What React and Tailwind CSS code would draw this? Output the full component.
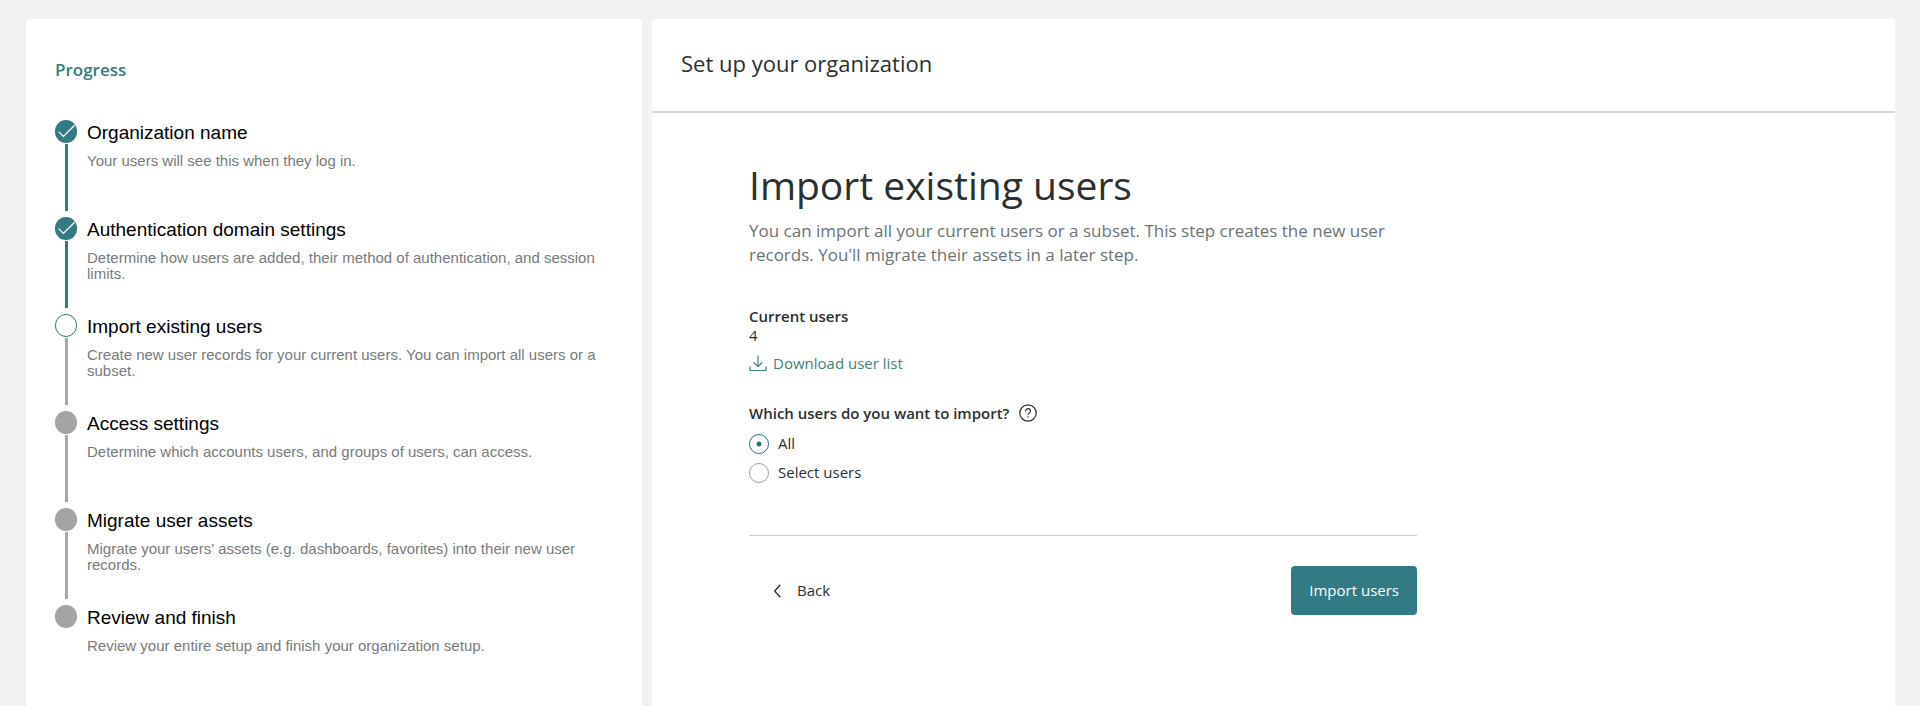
import { useState } from "react";

const steps = [
  { title: "Organization name", text: "Your users will see this when they log in.", state: "done" },
  {
    title: "Authentication domain settings",
    text: "Determine how users are added, their method of authentication, and session limits.",
    state: "done",
  },
  {
    title: "Import existing users",
    text: "Create new user records for your current users. You can import all users or a subset.",
    state: "current",
  },
  {
    title: "Access settings",
    text: "Determine which accounts users, and groups of users, can access.",
    state: "todo",
  },
  {
    title: "Migrate user assets",
    text: "Migrate your users' assets (e.g. dashboards, favorites) into their new user records.",
    state: "todo",
  },
  { title: "Review and finish", text: "Review your entire setup and finish your organization setup.", state: "todo" },
];

const circleStyles = {
  done: "bg-[#357a82]",
  current: "border border-[#2f7a74] bg-white",
  todo: "bg-[#a3a5a5]",
};

function Step({ step, last }) {
  return (
    <li className="flex min-h-[97px] gap-[10px]">
      <div className="flex w-[22px] shrink-0 flex-col items-center gap-px">
        <span className={`flex h-[23px] w-[22px] items-center justify-center rounded-full ${circleStyles[step.state]}`}>
          {step.state === "done" && (
            <svg viewBox="0 0 22 23" className="h-[23px] w-[22px]" fill="none" stroke="#fff" strokeWidth="1.3" aria-hidden="true">
              <path d="M3.6 11.6 8.4 16.4 19.6 5.2" />
            </svg>
          )}
        </span>
        {!last && (
          <span className={`h-[67px] w-[3px] ${step.state === "done" ? "bg-[#357a82]" : "bg-[#a8aaaa]"}`} />
        )}
      </div>
      <div className="pt-px font-['Liberation_Sans',Arial,sans-serif]">
        <h3 className="text-[19px] leading-6 text-black">{step.title}</h3>
        <p className="mt-2 text-[15px] leading-4 text-[#777b7b]">{step.text}</p>
      </div>
    </li>
  );
}

function Choice({ label, checked, onChange }) {
  return (
    <label className="flex h-[29px] items-center gap-[9px] text-[15px]">
      <input
        type="radio"
        name="import-scope"
        checked={checked}
        onChange={onChange}
        className="h-5 w-5 appearance-none rounded-full border border-[#9a9e9e] bg-white checked:border-[#1f6f70] checked:bg-[radial-gradient(circle,#2a7480_2px,transparent_3px)]"
      />
      {label}
    </label>
  );
}

export default function App() {
  const [scope, setScope] = useState("all");
  return (
    <div className="flex min-h-screen gap-[10px] bg-[#f2f2f2] pt-[19px] pr-[25px] pl-[26px] font-['Open_Sans',sans-serif] text-[#2a3030]">
      <aside className="w-[616px] min-w-0 rounded-t-[4px] bg-white pt-[39px] pr-10 pl-[29px]">
        <h2 className="text-[17px] leading-6 font-semibold text-[#357c7c]">Progress</h2>
        <ol className="mt-[38px]">
          {steps.map((step, i) => (
            <Step key={step.title} step={step} last={i === steps.length - 1} />
          ))}
        </ol>
      </aside>

      <main className="min-w-0 flex-1 rounded-t-[4px] bg-white">
        <header className="border-b-2 border-[#d5d7d7] px-[29px] pt-7 pb-8">
          <h2 className="text-[22px] leading-8">Set up your organization</h2>
        </header>
        <div className="ml-[97px] max-w-[668px] pt-[46px]">
          <h1 className="text-[39px] leading-[52px]">Import existing users</h1>
          <p className="mt-2 text-[17px] leading-6 text-[#6c7373]">
            You can import all your current users or a subset. This step creates the new user records. You'll migrate
            their assets in a later step.
          </p>

          <section className="mt-10 text-[15px]">
            <h3 className="leading-[19px] font-semibold">Current users</h3>
            <p className="leading-[19px]">4</p>
            <a href="#download" className="mt-2 flex items-center gap-[6px] leading-5 text-[#3f8279]">
              <svg viewBox="0 0 18 18" className="h-[18px] w-[18px]" fill="none" stroke="currentColor" strokeWidth="1.2" aria-hidden="true">
                <path d="M9 1.5V12.5M4.8 8.5 9 12.7l4.2-4.2M1 12.5V16.5H17V12.5" />
              </svg>
              Download user list
            </a>
          </section>

          <fieldset className="mt-[30px]">
            <legend className="flex items-center gap-[10px] text-[15px] leading-5 font-semibold">
              Which users do you want to import?
              <button type="button" aria-label="Help">
                <svg viewBox="0 0 18 18" className="block h-[18px] w-[18px]" fill="none" stroke="currentColor" strokeWidth="1.2" aria-hidden="true">
                  <circle cx="9" cy="9" r="8.2" />
                  <path d="M6.6 7.2C6.6 5.7 7.6 4.7 9 4.7s2.5.9 2.5 2.3c0 1.8-2.4 2-2.4 3.8" />
                  <path d="M9.1 12.2v1.4" />
                </svg>
              </button>
            </legend>
            <div className="pt-[6px]">
              <Choice label="All" checked={scope === "all"} onChange={() => setScope("all")} />
              <Choice label="Select users" checked={scope === "some"} onChange={() => setScope("some")} />
            </div>
          </fieldset>

          <footer className="mt-12 flex items-center justify-between border-t border-[#c9cccc] pt-[30px] text-[15px]">
            <button type="button" className="flex h-12 items-center gap-4 pl-6">
              <svg viewBox="0 0 8 14" className="h-[14px] w-2" fill="none" stroke="currentColor" strokeWidth="1.3" aria-hidden="true">
                <path d="M7.3.7 1.6 7l5.7 6.3" />
              </svg>
              Back
            </button>
            <button type="button" className="h-[49px] rounded-[4px] bg-[#327b84] px-[18px] text-white">
              Import users
            </button>
          </footer>
        </div>
      </main>
    </div>
  );
}
